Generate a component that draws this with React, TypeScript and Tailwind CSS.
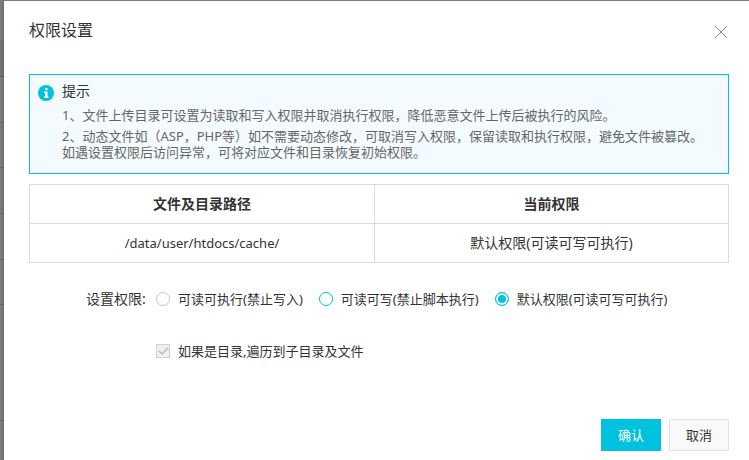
import { useState } from "react";

const tips = [
  "1、文件上传目录可设置为读取和写入权限并取消执行权限，降低恶意文件上传后被执行的风险。",
  "2、动态文件如（ASP，PHP等）如不需要动态修改，可取消写入权限，保留读取和执行权限，避免文件被篡改。如遇设置权限后访问异常，可将对应文件和目录恢复初始权限。",
];

const permissions = [
  { value: "rx", label: "可读可执行(禁止写入)", ring: "border-[#c4c6cf]" },
  { value: "rw", label: "可读可写(禁止脚本执行)", ring: "border-[#00c1de]" },
  { value: "rwx", label: "默认权限(可读可写可执行)", ring: "border-[#00c1de]" },
];

// the dimmed list behind the dialog, only its edge is visible
function Backdrop() {
  return (
    <div className="flex w-1 shrink-0 flex-col bg-linear-to-r from-[#82807e] to-[#706e6c]">
      <div className="h-[39px]" />
      <div className="h-[37px] border-b border-black/15 bg-black/8" />
      <div className="h-[46px] border-b border-black/15" />
      <div className="h-[45px] border-b border-black/15" />
      <div className="h-[46px] border-b border-black/15" />
      <div className="h-[46px] border-b border-black/15" />
      <div className="h-[45px] border-b border-black/15" />
      <div className="h-[116px] border-b border-black/15" />
    </div>
  );
}

function InfoIcon() {
  return (
    <svg viewBox="0 0 16 16" className="w-4 h-4 mt-[10px] shrink-0" aria-hidden="true">
      <circle cx="8" cy="8" r="8" fill="#00c1de" />
      <path d="M7 3h2.500v2.200H7zM6 6.500h3.500v5h1V13H6v-1.500h1V8H6z" fill="#fff" />
    </svg>
  );
}

function Notice() {
  return (
    <div className="flex gap-2 border border-[#00c1de] bg-[#f3fbfe] px-2 pb-2">
      <InfoIcon />
      <div className="pr-3">
        <h2 className="my-[6px] text-sm leading-5 text-[#333]">提示</h2>
        {tips.map((tip) => (
          <p key={tip} className="mb-[5px] text-[13px] leading-4 text-[#666]">
            {tip}
          </p>
        ))}
      </div>
    </div>
  );
}

function PathTable() {
  return (
    <table className="mt-[10px] w-full table-fixed border-collapse text-center text-sm leading-5">
      <thead>
        <tr className="h-[39px]">
          <th className="w-[345px] border border-[#dcdcdc] font-bold">文件及目录路径</th>
          <th className="border border-[#dcdcdc] font-bold">当前权限</th>
        </tr>
      </thead>
      <tbody>
        <tr className="h-[39px]">
          <td className="border border-[#dcdcdc] text-[13px]">/data/user/htdocs/cache/</td>
          <td className="border border-[#dcdcdc]">默认权限(可读可写可执行)</td>
        </tr>
      </tbody>
    </table>
  );
}

export default function App() {
  const [permission, setPermission] = useState("rwx");

  return (
    <div className="flex min-h-screen bg-[#7c7b79] pt-px font-['Noto_Sans','Noto_Sans_CJK_SC',sans-serif] text-[#333]">
      <Backdrop />
      <div className="flex flex-1 flex-col bg-white pl-[25px] pr-5 pb-[9px]">
        <div className="flex h-[73px] items-start justify-between">
          <h1 className="mt-[17px] text-base leading-6">权限设置</h1>
          <button type="button" aria-label="关闭" className="mt-[24px]">
            <svg viewBox="0 0 16 14" className="w-4 h-[14px]" stroke="#888" fill="none">
              <path d="M2 1l12 12M14 1L2 13" />
            </svg>
          </button>
        </div>

        <Notice />
        <PathTable />

        <fieldset className="mt-[26px] ml-[57px] flex items-center text-[13px] leading-5">
          <legend className="float-left w-[70px] text-sm leading-5">设置权限:</legend>
          <div className="flex gap-4">
            {permissions.map(({ value, label, ring }) => (
              <label key={value} className="flex items-center gap-2 whitespace-nowrap">
                <input
                  type="radio"
                  name="permission"
                  value={value}
                  checked={permission === value}
                  onChange={() => setPermission(value)}
                  className={`h-[14px] w-[14px] appearance-none rounded-full border ${ring} checked:bg-[#00c1de] checked:shadow-[inset_0_0_0_2px_#fff]`}
                />
                {label}
              </label>
            ))}
          </div>
        </fieldset>

        <label className="mt-8 ml-[127px] flex items-center gap-2 self-start text-[13px] leading-5">
          <span className="grid">
            <input
              type="checkbox"
              checked
              disabled
              className="col-start-1 row-start-1 h-[14px] w-[14px] appearance-none border border-[#d0d0d0] bg-[#f0f0f0]"
            />
            <svg
              viewBox="0 0 14 14"
              className="col-start-1 row-start-1 h-[14px] w-[14px]"
              fill="none"
              stroke="#bbb"
              strokeWidth="1.500"
            >
              <path d="M3 7l3 3 6-6" />
            </svg>
          </span>
          如果是目录,遍历到子目录及文件
        </label>

        <div className="mt-auto flex justify-end gap-2 text-[13px] leading-5">
          <button type="button" className="h-8 w-[60px] bg-[#00c1de] text-white">
            确认
          </button>
          <button type="button" className="h-8 w-[60px] border border-[#e1e1e1] bg-[#f9f9f9]">
            取消
          </button>
        </div>
      </div>
    </div>
  );
}
